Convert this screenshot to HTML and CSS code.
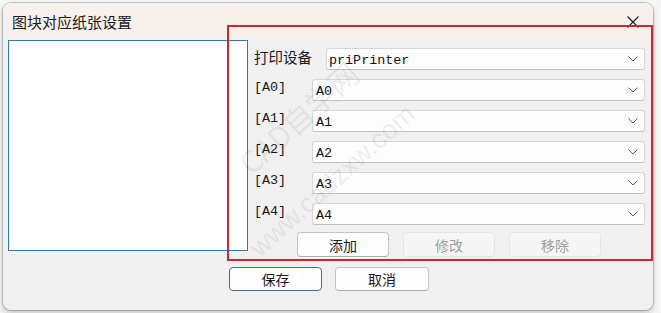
FILE: index.html
```html
<!DOCTYPE html>
<html lang="zh">
<head>
<meta charset="utf-8">
<title>图块对应纸张设置</title>
<link rel="stylesheet" href="styles.css">
</head>
<body>
<div class="dialog">
  <div class="titlebar">
    <span class="title">图块对应纸张设置</span>
    <svg class="close" width="12" height="12" viewBox="0 0 12 12"><path d="M0.5 0.5 L11.5 11.5 M11.5 0.5 L0.5 11.5" stroke="#1a1a1a" stroke-width="1.1" fill="none"/></svg>
  </div>
  <div class="content">
    <div class="top">
      <div class="listbox"></div>
      <div class="panel">
        <div class="row">
          <span class="label cn">打印设备</span>
          <div class="select"><span>priPrinter</span><svg class="chev" width="10" height="6" viewBox="0 0 10 6"><polyline points="0.5,0.5 5,5 9.5,0.5" fill="none" stroke="#5a5a5a" stroke-width="1"/></svg></div>
        </div>
        <div class="row">
          <span class="label mono">[A0]</span>
          <div class="select narrow"><span>A0</span><svg class="chev" width="10" height="6" viewBox="0 0 10 6"><polyline points="0.5,0.5 5,5 9.5,0.5" fill="none" stroke="#5a5a5a" stroke-width="1"/></svg></div>
        </div>
        <div class="row">
          <span class="label mono">[A1]</span>
          <div class="select narrow"><span>A1</span><svg class="chev" width="10" height="6" viewBox="0 0 10 6"><polyline points="0.5,0.5 5,5 9.5,0.5" fill="none" stroke="#5a5a5a" stroke-width="1"/></svg></div>
        </div>
        <div class="row">
          <span class="label mono">[A2]</span>
          <div class="select narrow"><span>A2</span><svg class="chev" width="10" height="6" viewBox="0 0 10 6"><polyline points="0.5,0.5 5,5 9.5,0.5" fill="none" stroke="#5a5a5a" stroke-width="1"/></svg></div>
        </div>
        <div class="row">
          <span class="label mono">[A3]</span>
          <div class="select narrow"><span>A3</span><svg class="chev" width="10" height="6" viewBox="0 0 10 6"><polyline points="0.5,0.5 5,5 9.5,0.5" fill="none" stroke="#5a5a5a" stroke-width="1"/></svg></div>
        </div>
        <div class="row">
          <span class="label mono">[A4]</span>
          <div class="select narrow"><span>A4</span><svg class="chev" width="10" height="6" viewBox="0 0 10 6"><polyline points="0.5,0.5 5,5 9.5,0.5" fill="none" stroke="#5a5a5a" stroke-width="1"/></svg></div>
        </div>
        <div class="actions">
          <button class="btn">添加</button>
          <button class="btn disabled">修改</button>
          <button class="btn disabled">移除</button>
        </div>
      </div>
    </div>
    <div class="bottom">
      <button class="btn primary">保存</button>
      <button class="btn cancel">取消</button>
    </div>
  </div>
  <div class="redbox"></div>
  <span class="wm wm1">CAD自学网</span>
  <span class="wm wm2">www.cadzxw.com</span>
</div>
</body>
</html>
```

FILE: styles.css
```css
html, body {
  margin: 0;
  padding: 0;
}
body {
  width: 661px;
  height: 313px;
  overflow: hidden;
  background: #f6f6f6;
  font-family: "Noto Sans CJK SC", "Noto Sans", sans-serif;
  color: #1a1a1a;
}
.dialog {
  position: relative;
  margin: 3px 0 0 3px;
  width: 650px;
  height: 307px;
  border-radius: 8px;
  overflow: hidden;
  background: #f0f0f0;
  box-shadow: 0 0 0 1px rgba(0,0,0,0.18), 0 3px 6px rgba(0,0,0,0.22);
}
.titlebar {
  height: 37px;
  background: #f7f0ec;
  display: flex;
  align-items: center;
  justify-content: space-between;
  padding: 0 14px 0 9px;
}
.title {
  font-size: 15px;
  line-height: 18px;
}
.close {
  display: block;
  margin-top: 1px;
}
.content {
  display: flex;
  flex-direction: column;
  padding: 0 8px 0 5px;
}
.top {
  display: flex;
  align-items: flex-start;
}
.listbox {
  width: 240px;
  height: 211px;
  box-sizing: border-box;
  border: 1px solid #2d7bb4;
  background: #ffffff;
}
.panel {
  flex: 1;
  display: flex;
  flex-direction: column;
  gap: 9px;
  padding: 8px 0 0 6px;
}
.row {
  display: flex;
  align-items: center;
  height: 22px;
}
.label {
  flex: none;
  color: #1a1a1a;
}
.label.cn {
  width: 72px;
  font-size: 14.5px;
  line-height: 18px;
  margin-top: -4px;
}
.label.mono {
  width: 58px;
  font-family: "Liberation Mono", "DejaVu Sans Mono", monospace;
  font-size: 13.4px;
  margin-top: -5px;
}
.select {
  flex: 1;
  height: 22px;
  box-sizing: border-box;
  border: 1px solid #d6d6d6;
  border-bottom-color: #c2c2c2;
  border-radius: 3px;
  background: #fdfdfd;
  display: flex;
  align-items: center;
  justify-content: space-between;
  padding: 2px 6px 0 2px;
  font-family: "Liberation Mono", "DejaVu Sans Mono", monospace;
  font-size: 13.4px;
  color: #111;
}
.select.narrow {
  padding-left: 3px;
}
.chev {
  display: block;
  margin-top: -2px;
}
.actions {
  display: flex;
  gap: 14px;
  padding-left: 43px;
  margin-top: -2px;
}
.btn {
  height: 25px;
  width: 92px;
  box-sizing: border-box;
  border: 1px solid #c4c4c4;
  border-bottom-color: #adadad;
  border-radius: 4px;
  background: #fdfdfd;
  font-family: "Noto Sans CJK SC", "Noto Sans", sans-serif;
  font-size: 14px;
  color: #1a1a1a;
  padding: 0;
  line-height: 22px;
}
.btn.disabled {
  background: #f5f5f5;
  border-color: #e5e5e5;
  color: #9e9e9e;
}
.bottom {
  display: flex;
  justify-content: center;
  gap: 13px;
  margin-top: 10px;
  padding-left: 5px;
}
.bottom .btn {
  height: 24px;
  width: 93px;
}
.btn.primary {
  border: 1px solid #3d6d9c;
}
.btn.cancel {
  width: 94px;
}
.redbox {
  position: absolute;
  left: 224px;
  top: 22px;
  width: 426px;
  height: 236px;
  box-sizing: border-box;
  border: 2px solid #d3242d;
  pointer-events: none;
}
.wm {
  position: absolute;
  white-space: nowrap;
  color: rgba(0,0,0,0.08);
  transform-origin: 0 100%;
  transform: rotate(-42deg);
  line-height: 1;
  pointer-events: none;
}
.wm1 {
  left: 250px;
  top: 145px;
  font-size: 30px;
}
.wm2 {
  left: 260px;
  top: 232px;
  font-size: 27px;
  font-family: "Liberation Sans", sans-serif;
}
```
